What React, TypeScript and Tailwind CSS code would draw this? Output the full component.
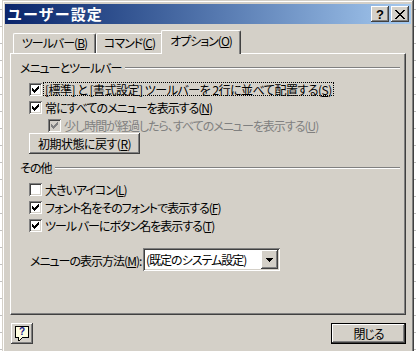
import React from "react";

const raised =
  "shadow-[inset_-1px_-1px_#404040,inset_1px_1px_#ffffff,inset_-2px_-2px_#808080,inset_2px_2px_#d4d0c8]";
const sunken =
  "shadow-[inset_1px_1px_#808080,inset_-1px_-1px_#ffffff,inset_2px_2px_#404040,inset_-2px_-2px_#d4d0c8]";

function CheckMark({ color }: { color: string }) {
  const pts = [
    [3, 5],
    [4, 6],
    [5, 7],
    [6, 6],
    [7, 5],
    [8, 4],
    [9, 3],
  ];
  return (
    <svg width="13" height="13" viewBox="0 0 13 13" shapeRendering="crispEdges" className="absolute left-0 top-0">
      {pts.map(([x, y]) => (
        <rect key={x} x={x} y={y} width="1" height="3" fill={color} />
      ))}
    </svg>
  );
}

function Box({ checked, disabled }: { checked?: boolean; disabled?: boolean }) {
  return (
    <div
      className={`relative w-[13px] h-[13px] shrink-0 ${disabled ? "bg-[#d4d0c8]" : "bg-white"} ${sunken}`}
    >
      {checked && <CheckMark color={disabled ? "#808080" : "#000000"} />}
    </div>
  );
}

function U({ children }: { children: React.ReactNode }) {
  return <span className="underline underline-offset-[1px] decoration-1">{children}</span>;
}

function CheckRow({
  checked,
  disabled,
  focus,
  indent,
  wide,
  children,
}: {
  checked?: boolean;
  disabled?: boolean;
  focus?: boolean;
  indent?: boolean;
  wide?: boolean;
  children: React.ReactNode;
}) {
  return (
    <div className={`flex items-center h-[18px] ${indent ? "pl-[37px]" : "pl-[18px]"}`}>
      <Box checked={checked} disabled={disabled} />
      <div
        className={`ml-[1px] px-[1px] leading-[13px] h-[14px] flex items-center whitespace-pre border border-dotted ${
          focus ? "border-black" : "border-transparent"
        } ${disabled ? "text-[#808080]" : "text-black"} ${wide ? "tracking-[-0.5px]" : ""}`}
      >
        {children}
      </div>
    </div>
  );
}

function GroupHeader({ children }: { children: React.ReactNode }) {
  return (
    <div className="flex items-center h-[14px] pl-[9px] pr-[5px]">
      <span className="leading-[14px] whitespace-nowrap">{children}</span>
      <div className="flex-1 ml-[4px] h-[2px] border-t border-t-[#808080] border-b border-b-white" />
    </div>
  );
}

export default function App() {
  return (
    <div className="w-[416px] h-[351px] overflow-hidden flex bg-white text-[12px] text-black tracking-[-1px] [font-feature-settings:'palt'] font-['Noto_Sans_CJK_JP',sans-serif]">
      <div className="w-[2px] h-full bg-[repeating-linear-gradient(to_bottom,#ffffff_0px,#ffffff_9px,#c0c0c0_9px,#c0c0c0_10px,#ffffff_10px,#ffffff_17px)]" />
      <div className="w-[412px] h-[360px] bg-[#d4d0c8] pt-[3px] px-[3px] flex flex-col shadow-[inset_-1px_-1px_#404040,inset_1px_1px_#d4d0c8,inset_-2px_-2px_#808080,inset_2px_2px_#ffffff]">
        {/* Title bar */}
        <div className="h-[20px] mt-[1px] flex items-center bg-linear-to-r from-[#0a246a] to-[#a6caf0] pl-[2px] pr-[2px]">
          <span className="text-white font-bold text-[15px] leading-[20px] tracking-[1px] [font-feature-settings:normal]">
            ユーザー設定
          </span>
          <div className="flex-1" />
          <div
            className={`w-[18px] h-[16px] bg-[#d4d0c8] ${raised} flex items-center justify-center font-bold text-[13px] leading-none tracking-normal font-['Liberation_Sans',sans-serif]`}
          >
            ?
          </div>
          <div className={`ml-[2px] w-[18px] h-[16px] bg-[#d4d0c8] ${raised} flex items-center justify-center`}>
            <svg width="10" height="9" viewBox="0 0 10 9" shapeRendering="crispEdges">
              {[0, 1, 2, 3, 4, 5, 6, 7, 8].map((i) => (
                <React.Fragment key={i}>
                  <rect x={i} y={i} width="2" height="1" fill="#000" />
                  <rect x={8 - i} y={i} width="2" height="1" fill="#000" />
                </React.Fragment>
              ))}
            </svg>
          </div>
        </div>

        {/* Body */}
        <div className="px-[5px] flex flex-col">
          {/* Tabs */}
          <div className="flex items-end h-[29px] pl-[3px] relative z-10">
            <div className="w-[83px] h-[20px] border-l border-t border-white border-r border-r-[#404040] shadow-[inset_-1px_0_#808080] rounded-t-[2px] flex items-center justify-center leading-none pb-[1px]">
              ツールバー(<U>B</U>)
            </div>
            <div className="w-[67px] h-[20px] border-l border-t border-white border-r border-r-[#404040] shadow-[inset_-1px_0_#808080] rounded-t-[2px] flex items-center justify-center leading-none pb-[1px]">
              コマンド(<U>C</U>)
            </div>
            <div className="-ml-[2px] -mb-[1px] w-[80px] h-[24px] bg-[#d4d0c8] border-l border-t border-white border-r border-r-[#404040] shadow-[inset_-1px_0_#808080] rounded-t-[2px] flex items-center justify-center leading-none pb-[3px]">
              オプション(<U>O</U>)
            </div>
          </div>

          {/* Panel */}
          <div className="h-[262px] border-l border-t border-white border-r border-b border-r-[#404040] border-b-[#404040] shadow-[inset_-1px_-1px_#808080] flex flex-col pt-[7px]">
            <GroupHeader>メニューとツールバー</GroupHeader>
            <div className="mt-[5px]">
              <CheckRow checked focus wide>
                [標準] と [書式設定] ツールバーを 2行に並べて配置する(<U>S</U>)
              </CheckRow>
              <CheckRow checked>
                常にすべてのメニューを表示する(<U>N</U>)
              </CheckRow>
              <CheckRow checked disabled indent>
                少し時間が経過したら、すべてのメニューを表示する(<U>U</U>)
              </CheckRow>
            </div>
            <div className="pl-[18px] -mt-[1px]">
              <div className={`w-[111px] h-[21px] ${raised} flex items-center justify-center leading-none tracking-[-0.5px]`}>
                初期状態に戻す(<U>R</U>)
              </div>
            </div>
            <div className="mt-[7px]">
              <GroupHeader>その他</GroupHeader>
            </div>
            <div className="mt-[5px]">
              <CheckRow>大きいアイコン(<U>L</U>)</CheckRow>
              <CheckRow checked>
                フォント名をそのフォントで表示する(<U>F</U>)
              </CheckRow>
              <CheckRow checked>
                ツール バーにボタン名を表示する(<U>T</U>)
              </CheckRow>
            </div>
            <div className="mt-[14px] pl-[19px] flex items-center h-[23px]">
              <span className="w-[113px] whitespace-nowrap leading-none pt-[2px]">
                メニューの表示方法(<U>M</U>):
              </span>
              <div className={`w-[137px] h-[23px] bg-white ${sunken} flex items-center p-[2px]`}>
                <span className="flex-1 pl-[1px] leading-none whitespace-nowrap">(既定のシステム設定)</span>
                <div className={`w-[17px] h-[19px] bg-[#d4d0c8] ${raised} flex items-center justify-center`}>
                  <svg width="7" height="4" viewBox="0 0 7 4" shapeRendering="crispEdges">
                    <rect x="0" y="0" width="7" height="1" fill="#000" />
                    <rect x="1" y="1" width="5" height="1" fill="#000" />
                    <rect x="2" y="2" width="3" height="1" fill="#000" />
                    <rect x="3" y="3" width="1" height="1" fill="#000" />
                  </svg>
                </div>
              </div>
            </div>
          </div>

          {/* Footer */}
          <div className="flex justify-between items-start pt-[8px] pl-[1px]">
            <div className={`w-[22px] h-[21px] ${raised} flex items-center justify-center`}>
              <div className="relative w-[14px] h-[15px]">
                <div className="absolute left-0 top-0 w-[14px] h-[12px] bg-[#ffffe0] border border-black flex items-center justify-center">
                  <span className="text-[#1a1a8a] font-bold text-[10px] leading-none tracking-normal font-['Liberation_Sans',sans-serif]">
                    ?
                  </span>
                </div>
                <svg className="absolute left-[3px] top-[11px]" width="5" height="4" viewBox="0 0 5 4" shapeRendering="crispEdges">
                  <rect x="0" y="0" width="1" height="4" fill="#000" />
                  <rect x="1" y="0" width="3" height="1" fill="#ffffe0" />
                  <rect x="1" y="1" width="2" height="1" fill="#ffffe0" />
                  <rect x="1" y="2" width="1" height="1" fill="#ffffe0" />
                  <rect x="1" y="3" width="1" height="1" fill="#000" />
                  <rect x="2" y="2" width="1" height="1" fill="#000" />
                  <rect x="3" y="1" width="1" height="1" fill="#000" />
                </svg>
              </div>
            </div>
            <div className="w-[75px] h-[21px] border border-black">
              <div className={`w-full h-full ${raised} flex items-center justify-center leading-none`}>閉じる</div>
            </div>
          </div>
        </div>
      </div>
      <div className="w-[2px] h-full bg-[repeating-linear-gradient(to_bottom,#ffffff_0px,#ffffff_9px,#c0c0c0_9px,#c0c0c0_10px,#ffffff_10px,#ffffff_17px)]" />
    </div>
  );
}
